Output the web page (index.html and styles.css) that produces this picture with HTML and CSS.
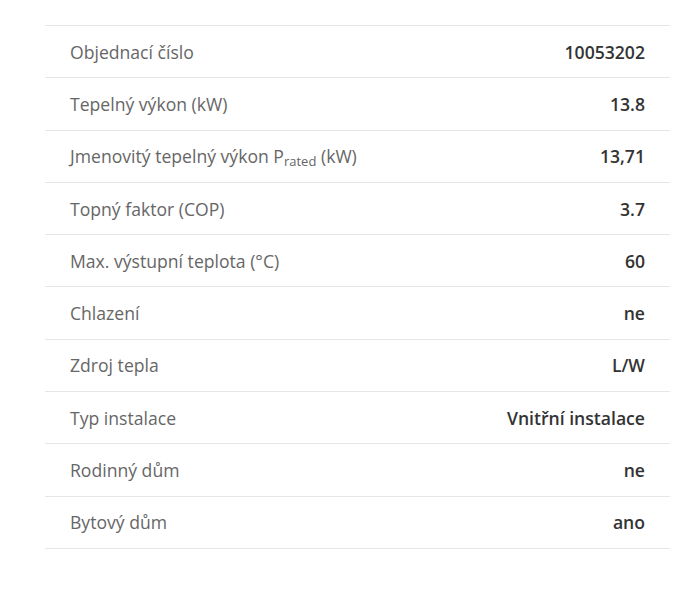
FILE: index.html
```html
<!DOCTYPE html>
<html lang="cs">
<head>
<meta charset="utf-8">
<link rel="stylesheet" href="styles.css">
</head>
<body>
<div class="page">
  <table class="params">
    <tbody>
      <tr><td class="label">Objednací číslo</td><td class="value">10053202</td></tr>
      <tr><td class="label">Tepelný výkon (kW)</td><td class="value">13.8</td></tr>
      <tr><td class="label">Jmenovitý tepelný výkon P<sub>rated</sub> (kW)</td><td class="value">13,71</td></tr>
      <tr><td class="label">Topný faktor (COP)</td><td class="value">3.7</td></tr>
      <tr><td class="label">Max. výstupní teplota (°C)</td><td class="value">60</td></tr>
      <tr><td class="label">Chlazení</td><td class="value">ne</td></tr>
      <tr><td class="label">Zdroj tepla</td><td class="value">L/W</td></tr>
      <tr><td class="label">Typ instalace</td><td class="value">Vnitřní instalace</td></tr>
      <tr><td class="label">Rodinný dům</td><td class="value">ne</td></tr>
      <tr><td class="label">Bytový dům</td><td class="value">ano</td></tr>
    </tbody>
  </table>
</div>
</body>
</html>
```
FILE: styles.css
```css
html, body {
  margin: 0;
  padding: 0;
  background: #ffffff;
}
.page {
  padding: 25px 14px 0 45px;
  font-family: "Open Sans", "Liberation Sans", sans-serif;
}
.params {
  width: 625px;
  border-collapse: collapse;
  border-top: 1px solid #e6e6e6;
}
.params td {
  border-bottom: 1px solid #e6e6e6;
  height: 51.3px;
  padding: 0 25px;
  font-size: 17.6px;
  line-height: 22px;
  vertical-align: middle;
}
.label {
  color: #666666;
  font-weight: 400;
  text-align: left;
}
.value {
  color: #333333;
  font-weight: 600;
  text-align: right;
  white-space: nowrap;
}
.label sub {
  font-size: 13px;
  vertical-align: -3px;
  line-height: 0;
}
```
